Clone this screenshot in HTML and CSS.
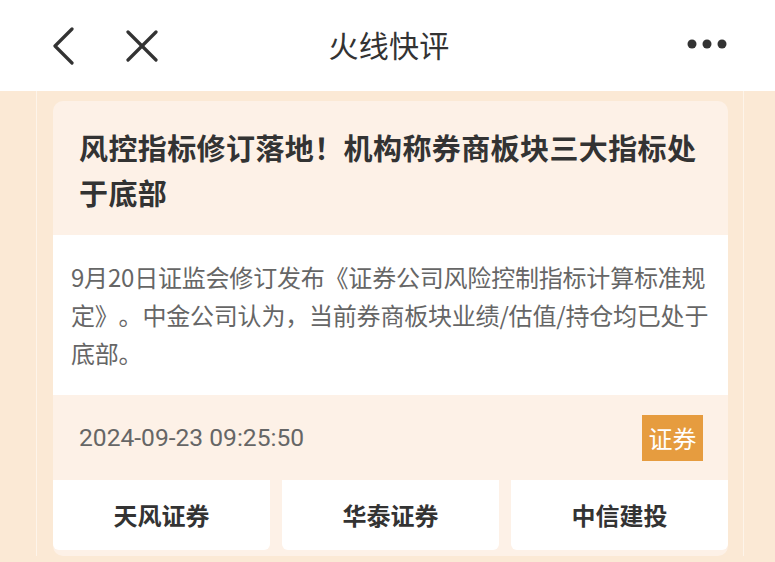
FILE: index.html
```html
<!DOCTYPE html>
<html>
<head>
    <meta charset="utf-8">
    <title>火线快评</title>
    <link rel="stylesheet" href="styles.css">
</head>
<body>
    <div class="topbar">
        <div class="nav-left">
            <svg class="icon-back" width="24" height="38" viewBox="0 0 24 38">
                <polyline points="21,2 4,19 21,36" fill="none" stroke="#333" stroke-width="3.2" stroke-linecap="round" stroke-linejoin="round"/>
            </svg>
            <svg class="icon-close" width="34" height="32" viewBox="0 0 34 32">
                <line x1="3" y1="2" x2="31" y2="30" stroke="#333" stroke-width="3.2" stroke-linecap="round"/>
                <line x1="31" y1="2" x2="3" y2="30" stroke="#333" stroke-width="3.2" stroke-linecap="round"/>
            </svg>
        </div>
        <div class="nav-title">火线快评</div>
        <div class="nav-right">
            <svg width="40" height="10" viewBox="0 0 40 10">
                <circle cx="5" cy="5" r="4.5" fill="#333"/>
                <circle cx="20" cy="5" r="4.5" fill="#333"/>
                <circle cx="35" cy="5" r="4.5" fill="#333"/>
            </svg>
        </div>
    </div>
    <div class="page">
        <div class="wrap">
            <div class="card">
                <h1 class="card-title">风控指标修订落地！机构称券商板块三大指标处于底部</h1>
                <div class="card-body">9月20日证监会修订发布《证券公司风险控制指标计算标准规定》。中金公司认为，当前券商板块业绩/估值/持仓均已处于底部。</div>
                <div class="card-meta">
                    <span class="date">2024-09-23 09:25:50</span>
                    <span class="tag">证券</span>
                </div>
                <div class="brokers">
                    <div class="broker">天风证券</div>
                    <div class="broker">华泰证券</div>
                    <div class="broker">中信建投</div>
                </div>
            </div>
        </div>
    </div>
</body>
</html>
```

FILE: styles.css
```css
:root {
    --bg: #fbe9d5;
    --card: #fdf1e7;
    --text: #333333;
    --muted: #666666;
    --tag: #e69c3f;
}
html, body { margin: 0; padding: 0; }
body { font-family: 'Noto Sans CJK SC', 'Noto Sans', sans-serif; background: var(--bg); color: var(--text); height: 562px; overflow: hidden; text-spacing-trim: space-all; }

.topbar { height: 91px; background: #fff; display: grid; grid-template-columns: 1fr auto 1fr; align-items: center; padding: 0 48px 0 51px; box-sizing: border-box; }
.nav-left { display: flex; align-items: center; gap: 50px; }
.icon-back { margin-top: 1px; }
.nav-title { font-size: 30px; color: var(--text); letter-spacing: 0.3px; margin-top: -4px; }
.nav-right { display: flex; justify-content: flex-end; margin-top: -4px; }

.page { padding: 0 31px 0 36px; }
.wrap { border-left: 1px solid #fdf4ea; border-right: 1px solid #fdf4ea; padding: 10px 15px 0 16px; }

.card { background: var(--card); border-radius: 10px; padding-bottom: 6px; overflow: hidden; }
.card-title { margin: 0; padding: 24px 20px 20px 26px; font-size: 29px; line-height: 45px; font-weight: bold; letter-spacing: 0.4px; color: var(--text); }
.card-body { background: #fff; padding: 23px 10px 23px 18px; font-size: 24px; line-height: 38px; letter-spacing: -0.2px; color: var(--muted); }
.card-meta { display: flex; align-items: center; justify-content: space-between; padding: 0 25px 0 26px; height: 85px; }
.date { font-family: Roboto, 'Liberation Sans', sans-serif; font-size: 24.6px; color: var(--muted); }
.tag { background: var(--tag); color: #fff; font-size: 24px; width: 61px; height: 46px; line-height: 46px; text-align: center; }

.brokers { display: grid; grid-template-columns: repeat(3, 1fr); gap: 12px; }
.broker { background: #fff; height: 70px; line-height: 70px; text-align: center; font-size: 24px; font-weight: bold; color: var(--text); border-radius: 0 0 6px 6px; }
```
